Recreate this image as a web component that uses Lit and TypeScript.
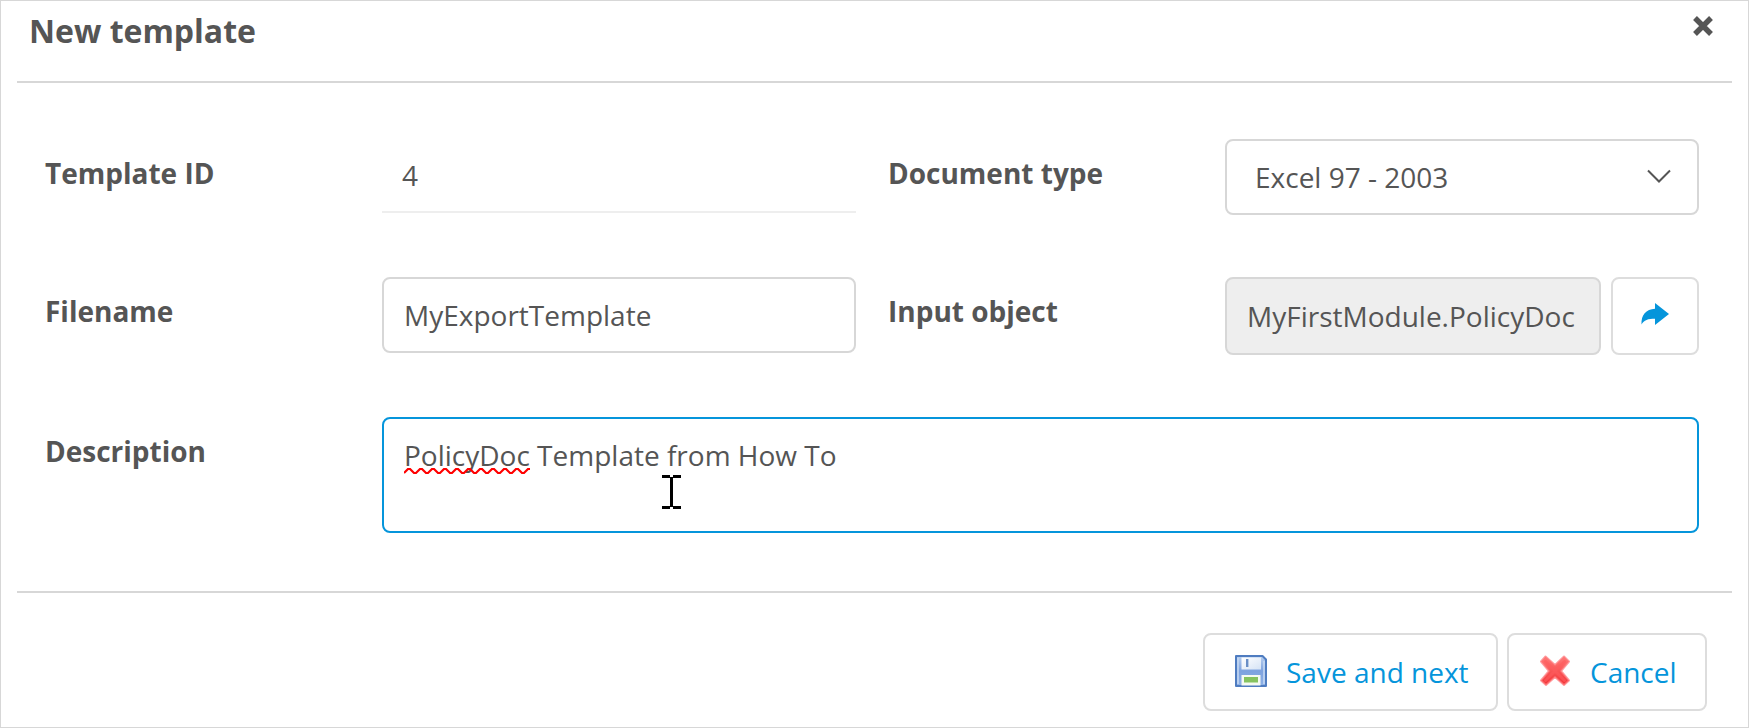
import { LitElement, html, css } from "lit";
import { customElement } from "lit/decorators.js";

@customElement("app-root")
export class AppRoot extends LitElement {
  static styles = css`
    :host { display: block; }
    * { box-sizing: border-box; }
    .dialog {
      height: 728px; border: 1px solid #d7d7d7; background: #fff; color: #555;
      font: 28px/40px "Open Sans", sans-serif; padding: 0 16px; overflow: hidden;
      display: flex; flex-direction: column;
    }
    .header {
      flex: none; height: 82px; border-bottom: 2px solid #d7d7d7; padding: 8px 19px 0 12px;
      display: flex; justify-content: space-between; align-items: flex-start;
    }
    .title { margin: 0; font-size: 32px; line-height: 44px; font-weight: 700; }
    .close { border: 0; background: none; padding: 7px 0 0; display: flex; }
    .form {
      flex: none; height: 510px; border-bottom: 2px solid #d7d7d7; padding: 56px 33px 0 28px;
      display: grid; grid-template-columns: 337px 474px 32px 337px 474px;
      grid-template-rows: 76px 78px 116px; row-gap: 62px; align-items: start;
    }
    .label { font-weight: 700; padding-top: 14px; }
    .second { grid-column: 4; }
    .static { height: 74px; border-bottom: 2px solid #eee; padding: 16px 20px; }
    .box { border: 2px solid #d7d7d7; border-radius: 8px; height: 76px; padding: 16px 20px; white-space: nowrap; }
    .select { display: flex; justify-content: space-between; padding: 16px 26px 16px 28px; }
    .chevron { margin-top: 12px; }
    .pair { display: flex; gap: 10px; }
    .readonly { background: #eee; width: 376px; height: 78px; padding-top: 17px; }
    .icon-btn { width: 88px; height: 78px; border: 2px solid #ddd; border-radius: 8px; background: #fff; padding: 0; display: grid; place-items: center; }
    .icon-btn svg { margin-top: -4px; }
    .area { grid-column: 2 / -1; height: 116px; border-color: #0595db; position: relative; }
    .misspelt { position: relative; }
    .squiggle { position: absolute; left: 0; top: 32px; }
    .cursor { position: absolute; left: 278px; top: 56px; }
    .footer { display: flex; justify-content: flex-end; gap: 9px; padding: 40px 25px 0 0; }
    .btn {
      height: 78px; border: 2px solid #ddd; border-radius: 8px; background: #fff; color: #0595db;
      font: inherit; padding: 0 0 0 29px; display: flex; align-items: center; white-space: nowrap;
    }
    .btn svg { flex: none; margin-top: -2px; }
    .save { width: 295px; gap: 18px; }
    .cancel { width: 200px; gap: 18px; }
  `;

  render() {
    return html`
      <div class="dialog">
        <div class="header">
          <h1 class="title">New template</h1>
          <button class="close" aria-label="Close">
            <svg width="20" height="20" viewBox="0 0 20 20"><path d="M2 2L18 18M18 2L2 18" stroke="#555" stroke-width="5.400" fill="none"/></svg>
          </button>
        </div>
        <div class="form">
          <div class="label">Template ID</div>
          <div class="static">4</div>
          <div class="label second">Document type</div>
          <div class="box select">
            <span>Excel 97 - 2003</span>
            <svg class="chevron" width="24" height="16" viewBox="0 0 24 16"><path d="M1 1.500L12 12.500L23 1.500" stroke="#555" stroke-width="2" fill="none"/></svg>
          </div>
          <div class="label">Filename</div>
          <div class="box">MyExportTemplate</div>
          <div class="label second">Input object</div>
          <div class="pair">
            <div class="box readonly">MyFirstModule.PolicyDoc</div>
            <button class="icon-btn" aria-label="Select">
              <svg width="28" height="22" viewBox="0 0 28 22"><path d="M14 0L28 11L14 22V15.800C7 15.800 3 17 0.500 21.500C0 12 5 6 14 5.700Z" fill="#0595db"/></svg>
            </button>
          </div>
          <div class="label">Description</div>
          <div class="box area">
            <span class="misspelt">PolicyDoc<svg class="squiggle" width="126" height="7" viewBox="0 0 126 7"><path d="M0 5L4 1H6L10 5H12L16 1H18L22 5H24L28 1H30L34 5H36L40 1H42L46 5H48L52 1H54L58 5H60L64 1H66L70 5H72L76 1H78L82 5H84L88 1H90L94 5H96L100 1H102L106 5H108L112 1H114L118 5H120L124 1H126" stroke="red" stroke-width="2.200" fill="none"/></svg></span>
            Template from How To
            <svg class="cursor" width="20" height="34" viewBox="0 0 20 34"><path d="M0 1.500H8M11 1.500H19M0 32.500H8M11 32.500H19M9.500 2V32" stroke="#000" stroke-width="3" fill="none"/></svg>
          </div>
        </div>
        <div class="footer">
          <button class="btn save">
            <svg width="34" height="34" viewBox="0 0 34 34">
              <defs>
                <linearGradient id="body" x1="0" y1="0" x2="0" y2="1"><stop offset="0" stop-color="#b9d0f0"/><stop offset=".5" stop-color="#7da2df"/><stop offset="1" stop-color="#8fb2e6"/></linearGradient>
                <linearGradient id="plate" x1="0" y1="0" x2="1" y2="1"><stop offset="0" stop-color="#fff"/><stop offset="1" stop-color="#d5e3f5"/></linearGradient>
              </defs>
              <path d="M2 2H28.500L32 5.500V32H2Z" fill="url(#body)" stroke="#4f7cc0" stroke-width="2" stroke-linejoin="round"/>
              <path d="M4 4V30M30 7V30" stroke="#c7daf4" stroke-width="1.500"/>
              <path d="M7.500 3.500H27V15.500H7.500Z" fill="url(#plate)"/>
              <rect x="12" y="5" width="2.400" height="8" fill="#6a8fc6"/>
              <rect x="7.500" y="21" width="19" height="10.500" fill="#f5faf2"/>
              <rect x="10" y="23" width="14" height="5.500" fill="#86c35f"/>
            </svg>
            Save and next
          </button>
          <button class="btn cancel">
            <svg width="34" height="34" viewBox="0 0 34 34">
              <defs><linearGradient id="red" x1="0" y1="0" x2="0" y2="1"><stop offset="0" stop-color="#ff7b78"/><stop offset="1" stop-color="#f23236"/></linearGradient></defs>
              <path d="M7.500 2.500L17 11L26 2.500L31 7.500L23 17L31 26.500L26 31L17 23L8 31L3 26.500L11 17L3 7.500Z" fill="url(#red)" stroke="#ff7476" stroke-opacity=".7" stroke-width="2" stroke-linejoin="round"/>
              <path d="M7.500 7.500L26.500 26.500M26.500 7.500L7.500 26.500" stroke="#ff5c5e" stroke-width="3" stroke-linecap="round" opacity=".6"/>
            </svg>
            Cancel
          </button>
        </div>
      </div>
    `;
  }
}
